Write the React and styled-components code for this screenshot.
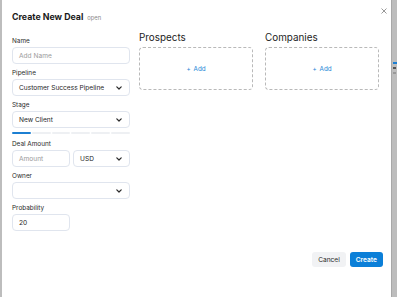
import React from "react";
import styled, { createGlobalStyle } from "styled-components";

const GlobalStyle = createGlobalStyle`
  html, body {
    margin: 0;
    padding: 0;
    height: 100%;
    overflow: hidden;
    font-family: Inter, "Liberation Sans", sans-serif;
    background: #bdbdbd;
  }
  * { box-sizing: border-box; }
`;

const Page = styled.div`
  height: 100vh;
  display: flex;
  justify-content: flex-end;
  padding-top: 62px;
`;

const PageStrip = styled.div`
  width: 4px;
  display: flex;
  flex-direction: column;
  gap: 3px;
`;

const PageBar = styled.div`
  height: 2px;
  background: ${(p) => p.color};
  width: ${(p) => p.w || 4}px;
`;

const Modal = styled.div`
  position: fixed;
  top: 0;
  left: 2px;
  width: 390px;
  height: 100vh;
  background: #fff;
  border-right: 1px solid #a8a8a8;
  display: flex;
  flex-direction: column;
  padding: 10px 8px 30px 10px;
`;

const Header = styled.div`
  display: flex;
  align-items: baseline;
  gap: 4px;
  height: 13px;
`;

const Title = styled.h2`
  margin: 0;
  font-size: 8.8px;
  font-weight: 700;
  color: #1a1a1a;
  line-height: 13px;
`;

const Status = styled.span`
  font-size: 5.8px;
  color: #8a8a8a;
`;

const Close = styled.button`
  position: absolute;
  top: 6px;
  right: 2px;
  border: 0;
  background: none;
  padding: 0;
  width: 10px;
  height: 10px;
  display: flex;
  align-items: center;
  justify-content: center;
  color: #8c8c8c;
`;

const Body = styled.div`
  display: flex;
  margin-top: 8px;
`;

const LeftCol = styled.div`
  width: 118px;
  padding-top: 6px;
  margin-right: 9px;
  display: flex;
  flex-direction: column;
`;

const Field = styled.div`
  display: flex;
  flex-direction: column;
  margin-bottom: ${(p) => p.mb ?? 5}px;
`;

const Label = styled.label`
  font-size: 6.4px;
  color: #2b2b2b;
  line-height: 8px;
  margin-bottom: 2px;
`;

const Input = styled.div`
  height: 17px;
  width: ${(p) => p.w || "100%"};
  border: 1px solid #e0e5ee;
  border-radius: 4px;
  display: flex;
  align-items: center;
  justify-content: space-between;
  padding: 0 7px 0 6px;
  font-size: 6.6px;
  color: ${(p) => (p.placeholder ? "#9a9a9a" : "#1f1f1f")};
`;

const Row = styled.div`
  display: flex;
  gap: 3px;
`;

const Progress = styled.div`
  display: flex;
  gap: 1px;
  margin-top: 4px;
  margin-bottom: 6px;
`;

const Segment = styled.div`
  flex: 1;
  height: 2px;
  border-radius: 1px;
  background: ${(p) => (p.active ? "#1c7fd2" : "#eef0f3")};
`;

const Panels = styled.div`
  display: flex;
  gap: 12px;
`;

const Panel = styled.div`
  width: 114px;
  display: flex;
  flex-direction: column;
`;

const PanelTitle = styled.h3`
  margin: 0 0 3px;
  font-size: 9.9px;
  font-weight: 400;
  color: #1d1d1d;
  line-height: 13px;
`;

const DropBox = styled.div`
  height: 43px;
  border: 1px dashed #b9b9b9;
  border-radius: 4px;
  display: flex;
  align-items: center;
  justify-content: center;
  font-size: 6.3px;
  color: #1e86d6;
  gap: 3px;
`;

const Footer = styled.div`
  margin-top: auto;
  display: flex;
  justify-content: flex-end;
  gap: 4px;
`;

const Button = styled.button`
  height: 15px;
  padding: 0 6px;
  border: 0;
  border-radius: 3px;
  font-family: inherit;
  font-size: 6.6px;
  font-weight: ${(p) => (p.primary ? 600 : 400)};
  color: ${(p) => (p.primary ? "#fff" : "#2a2a2a")};
  background: ${(p) => (p.primary ? "#0b7fd8" : "#f1f2f4")};
  min-width: 32px;
`;

const Chevron = () => (
  <svg width="6" height="4" viewBox="0 0 6 4">
    <polyline points="0.8,0.8 3,3 5.2,0.8" fill="none" stroke="#2a2a2a" strokeWidth="1.2" strokeLinecap="round" strokeLinejoin="round" />
  </svg>
);

const Select = ({ value, w }) => (
  <Input w={w}>
    <span>{value}</span>
    <Chevron />
  </Input>
);

export default function App() {
  return (
    <>
      <GlobalStyle />
      <Page>
        <PageStrip>
          <PageBar color="#1c7fd2" />
          <PageBar color="#555" w={3} />
          <PageBar color="#999" w={3} />
        </PageStrip>
      </Page>
      <Modal>
        <Header>
          <Title>Create New Deal</Title>
          <Status>open</Status>
        </Header>
        <Close aria-label="Close">
          <svg width="6" height="6" viewBox="0 0 6 6">
            <path d="M0.5 0.5 L5.5 5.5 M5.5 0.5 L0.5 5.5" stroke="#8c8c8c" strokeWidth="0.9" />
          </svg>
        </Close>
        <Body>
          <LeftCol>
            <Field>
              <Label>Name</Label>
              <Input placeholder="true">Add Name</Input>
            </Field>
            <Field>
              <Label>Pipeline</Label>
              <Select value="Customer Success Pipeline" />
            </Field>
            <Field mb={0}>
              <Label>Stage</Label>
              <Select value="New Client" />
            </Field>
            <Progress>
              {[0, 1, 2, 3, 4, 5].map((i) => (
                <Segment key={i} active={i === 0} />
              ))}
            </Progress>
            <Field>
              <Label>Deal Amount</Label>
              <Row>
                <Input w="58px" placeholder="true">Amount</Input>
                <Select value="USD" w="57px" />
              </Row>
            </Field>
            <Field>
              <Label>Owner</Label>
              <Select value="" />
            </Field>
            <Field>
              <Label>Probability</Label>
              <Input w="58px">20</Input>
            </Field>
          </LeftCol>
          <Panels>
            <Panel>
              <PanelTitle>Prospects</PanelTitle>
              <DropBox>
                <span>+</span>
                <span>Add</span>
              </DropBox>
            </Panel>
            <Panel>
              <PanelTitle>Companies</PanelTitle>
              <DropBox>
                <span>+</span>
                <span>Add</span>
              </DropBox>
            </Panel>
          </Panels>
        </Body>
        <Footer>
          <Button>Cancel</Button>
          <Button primary>Create</Button>
        </Footer>
      </Modal>
    </>
  );
}
